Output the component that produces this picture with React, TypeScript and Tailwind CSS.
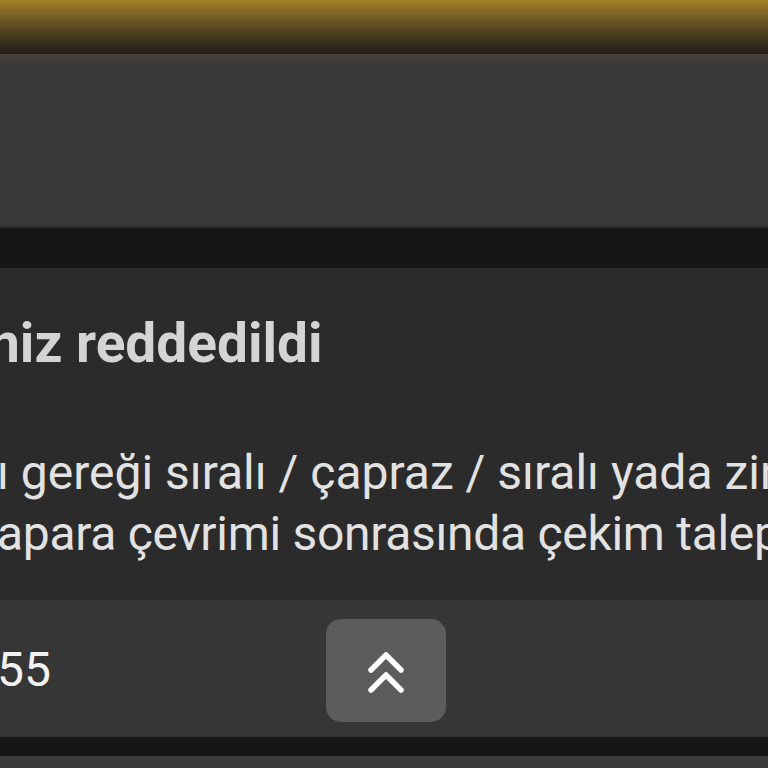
import React from "react";

function DoubleUp() {
  return (
    <svg width="40" height="48" viewBox="0 0 40 48" fill="none">
      <path d="M5 23 L20 8 L35 23" stroke="#ffffff" strokeWidth="5.5" strokeLinecap="round" strokeLinejoin="round" />
      <path d="M5 43 L20 28 L35 43" stroke="#ffffff" strokeWidth="5.5" strokeLinecap="round" strokeLinejoin="round" />
    </svg>
  );
}

export default function App() {
  return (
    <div
      className="w-[768px] h-[768px] overflow-hidden bg-[#3a3a3a] flex flex-col"
      style={{ fontFamily: "Roboto, 'Noto Sans', sans-serif" }}
    >
      <div className="h-[54px] shrink-0 bg-gradient-to-b from-[#a38125] via-[#5c4b22] to-[#201d17]" />
      <div className="h-[174px] shrink-0 bg-[linear-gradient(to_bottom,#48413d_0px,#3d3a39_8px,#383838_14px,#383838_100%)] border-b-2 border-[#2a2a2a]" />
      <div className="h-[40px] shrink-0 bg-[#161616]" />
      <div className="shrink-0 bg-[#2b2b2b] pt-[43px] pb-[36px] overflow-hidden">
        <div className="text-[55px] leading-[64px] font-bold text-[#d4d4d4] whitespace-nowrap ml-[-11px]">
          niz reddedildi
        </div>
        <div className="mt-[67px] text-[48px] leading-[61px] text-[#e2e2e2] whitespace-nowrap">
          <div className="ml-[-3px]">ı gereği sıralı / çapraz / sıralı yada zincir</div>
          <div className="ml-[-3px] tracking-[-0.3px]">apara çevrimi sonrasında çekim talep edebilirsiniz</div>
        </div>
      </div>
      <div className="shrink-0 h-[137px] bg-[#363636] flex items-start overflow-hidden">
        <div className="w-[326px] h-full flex items-center">
          <span className="text-[48px] leading-none text-[#f2f2f2] ml-[-3px] mt-[2px]">55</span>
        </div>
        <div className="mt-[19px] w-[120px] h-[103px] rounded-[15px] bg-[#5c5c5c] flex items-center justify-center">
          <DoubleUp />
        </div>
      </div>
      <div className="h-[19px] shrink-0 bg-[#161616]" />
      <div className="flex-1 bg-[#3a3a3a]" />
    </div>
  );
}
